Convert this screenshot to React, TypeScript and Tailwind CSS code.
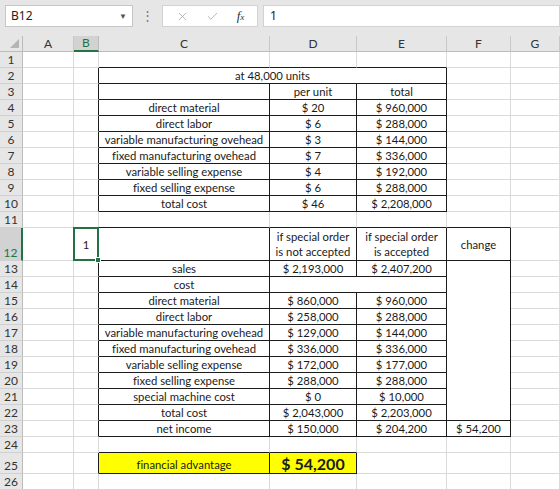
import { Fragment, type ReactNode } from "react";
import { X, Check } from "lucide-react";

type Cell = { t?: ReactNode; span?: number; rows?: number; cls?: string };

const COLS = ["A", "B", "C", "D", "E", "F", "G"];

const UNIT_ROWS = [
  ["direct material", "$ 20", "$ 960,000"],
  ["direct labor", "$ 6", "$ 288,000"],
  ["variable manufacturing ovehead", "$ 3", "$ 144,000"],
  ["fixed manufacturing ovehead", "$ 7", "$ 336,000"],
  ["variable selling expense", "$ 4", "$ 192,000"],
  ["fixed selling expense", "$ 6", "$ 288,000"],
  ["total cost", "$ 46", "$ 2,208,000"],
];

const ORDER_ROWS = [
  ["direct material", "$ 860,000", "$ 960,000"],
  ["direct labor", "$ 258,000", "$ 288,000"],
  ["variable manufacturing ovehead", "$ 129,000", "$ 144,000"],
  ["fixed manufacturing ovehead", "$ 336,000", "$ 336,000"],
  ["variable selling expense", "$ 172,000", "$ 177,000"],
  ["fixed selling expense", "$ 288,000", "$ 288,000"],
  ["special machine cost", "$ 0", "$ 10,000"],
  ["total cost", "$ 2,043,000", "$ 2,203,000"],
  ["net income", "$ 150,000", "$ 204,200"],
];

const CELLS: Record<string, Cell> = {
  C2: { t: "at 48,000 units", span: 3 },
  D3: { t: "per unit" },
  E3: { t: "total" },
  B12: { t: "1" },
  D12: { t: <span className="text-center leading-[15px] whitespace-normal">if special order<br />is not accepted</span> },
  E12: { t: <span className="text-center leading-[15px] whitespace-normal">if special order<br />is accepted</span> },
  F12: { t: "change" },
  C13: { t: "sales" },
  D13: { t: "$ 2,193,000" },
  E13: { t: "$ 2,407,200" },
  C14: { t: "cost" },
  D14: { span: 2 },
  F13: { rows: 10 },
  F23: { t: "$ 54,200" },
  C25: { t: "financial advantage", cls: "bg-[#ffff00] items-end pb-[1px]" },
  D25: { t: "$ 54,200", cls: "bg-[#ffff00] items-end font-bold text-[16px] leading-[19px]" },
};

UNIT_ROWS.forEach(([a, b, c], i) => {
  CELLS[`C${i + 4}`] = { t: a };
  CELLS[`D${i + 4}`] = { t: b };
  CELLS[`E${i + 4}`] = { t: c };
});
ORDER_ROWS.forEach(([a, b, c], i) => {
  CELLS[`C${i + 15}`] = { t: a };
  CELLS[`D${i + 15}`] = { t: b };
  CELLS[`E${i + 15}`] = { t: c };
});

// cells hidden under a merge
const COVERED = new Set(["D2", "E2", "E14", ...Array.from({ length: 9 }, (_, i) => `F${i + 14}`)]);

const rightBlack = (r: number, c: number) =>
  (r >= 2 && r <= 10 && c >= 1 && c <= 4) ||
  (r >= 12 && r <= 23 && c >= 1 && c <= 5) ||
  (r === 25 && c >= 1 && c <= 3);

const bottomBlack = (r: number, c: number) =>
  (c >= 2 && c <= 4 && r >= 1 && r <= 23) ||
  (c === 5 && (r === 11 || r === 12 || r === 22 || r === 23)) ||
  (c >= 2 && c <= 3 && (r === 24 || r === 25));

function RowHead({ r }: { r: number }) {
  const sel = r === 12;
  return (
    <div
      className={`flex items-end justify-center border-b border-b-[#d0d0d0] text-[12px] leading-[15px] ${
        sel ? "bg-[#d2d2d2] text-[#217346] border-r-2 border-r-[#217346]" : "bg-[#e6e6e6] text-[#333] border-r border-r-[#bcbcbc]"
      }`}
    >
      {r}
    </div>
  );
}

function SheetCell({ r, c }: { r: number; c: number }) {
  const key = `${COLS[c]}${r}`;
  const cell = CELLS[key] ?? {};
  const lastC = c + (cell.span ?? 1) - 1;
  const lastR = r + (cell.rows ?? 1) - 1;
  const rb = rightBlack(r, lastC) ? "border-r-[#1c1c1c]" : "border-r-[#dadada]";
  const bb = bottomBlack(lastR, c) ? "border-b-[#1c1c1c]" : "border-b-[#dadada]";
  const span = cell.span === 3 ? "col-span-3" : cell.span === 2 ? "col-span-2" : "";
  const rows = cell.rows === 10 ? "row-span-10" : "";
  return (
    <div
      className={`relative flex justify-center whitespace-nowrap border-r border-b leading-[15px] ${rb} ${bb} ${span} ${rows} ${
        cell.cls ?? "items-center bg-white"
      }`}
    >
      {cell.t}
      {key === "B12" && (
        <div className="absolute -left-[1px] -top-[1px] -right-[1px] -bottom-[1px] z-10 border-2 border-[#217346]">
          <div className="absolute -right-[4px] -bottom-[4px] w-[6px] h-[6px] bg-[#217346] border border-white" />
        </div>
      )}
    </div>
  );
}

export default function App() {
  return (
    <div className="w-[560px] h-[489px] overflow-hidden bg-white font-['Lato',sans-serif] text-[11.3px] text-[#1a1a1a] [font-variant-ligatures:none]">
      {/* formula bar */}
      <div className="h-[36px] bg-[#e6e6e6] flex items-start pt-[5px] pl-[5px] font-['Noto_Sans',sans-serif]">
        <div className="w-[128px] h-[22px] bg-white border border-[#c6c6c6] flex items-center justify-between pl-[5px] pr-[5px] text-[12px] text-[#222]">
          B12
          <span className="text-[8px] text-[#555]">▼</span>
        </div>
        <div className="w-[29px] h-[22px] flex items-center justify-center text-[#7a7a7a] text-[13px]">⋮</div>
        <div className="w-[96px] h-[22px] bg-white border border-[#d2d2d2] flex items-center justify-around px-[4px]">
          <X size={13} strokeWidth={1.3} className="text-[#9a9a9a]" />
          <Check size={13} strokeWidth={1.3} className="text-[#9a9a9a]" />
          <span className="font-['Liberation_Serif',serif] italic text-[13px] text-[#333]">
            f<span className="text-[9px]">x</span>
          </span>
        </div>
        <div className="ml-[5px] flex-1 h-[22px] bg-white border border-[#d2d2d2] flex items-center pl-[6px] text-[12px] text-[#222]">
          1
        </div>
      </div>

      {/* sheet */}
      <div className="grid grid-cols-[23px_51px_25px_171px_87px_90px_64px_1fr] grid-rows-[16px_repeat(11,16px)_33px_repeat(12,16px)_21px_16px]">
        <div className="relative bg-[#e6e6e6] border-r border-b border-r-[#bcbcbc] border-b-[#bcbcbc]">
          <div className="absolute right-[3px] bottom-[3px] w-0 h-0 border-l-[9px] border-l-transparent border-b-[9px] border-b-[#b4b4b4]" />
        </div>
        {COLS.map((col) =>
          col === "B" ? (
            <div
              key={col}
              className="flex items-center justify-center bg-[#d2d2d2] text-[#217346] border-r border-r-[#bcbcbc] border-b-2 border-b-[#217346] text-[12px]"
            >
              {col}
            </div>
          ) : (
            <div
              key={col}
              className="flex items-center justify-center bg-[#e6e6e6] text-[#333] border-r border-r-[#c8c8c8] border-b border-b-[#bcbcbc] text-[12px]"
            >
              {col}
            </div>
          )
        )}
        {Array.from({ length: 26 }, (_, i) => i + 1).map((r) => (
          <Fragment key={r}>
            <RowHead r={r} />
            {COLS.map((col, c) => (COVERED.has(`${col}${r}`) ? null : <SheetCell key={col} r={r} c={c} />))}
          </Fragment>
        ))}
      </div>
    </div>
  );
}
